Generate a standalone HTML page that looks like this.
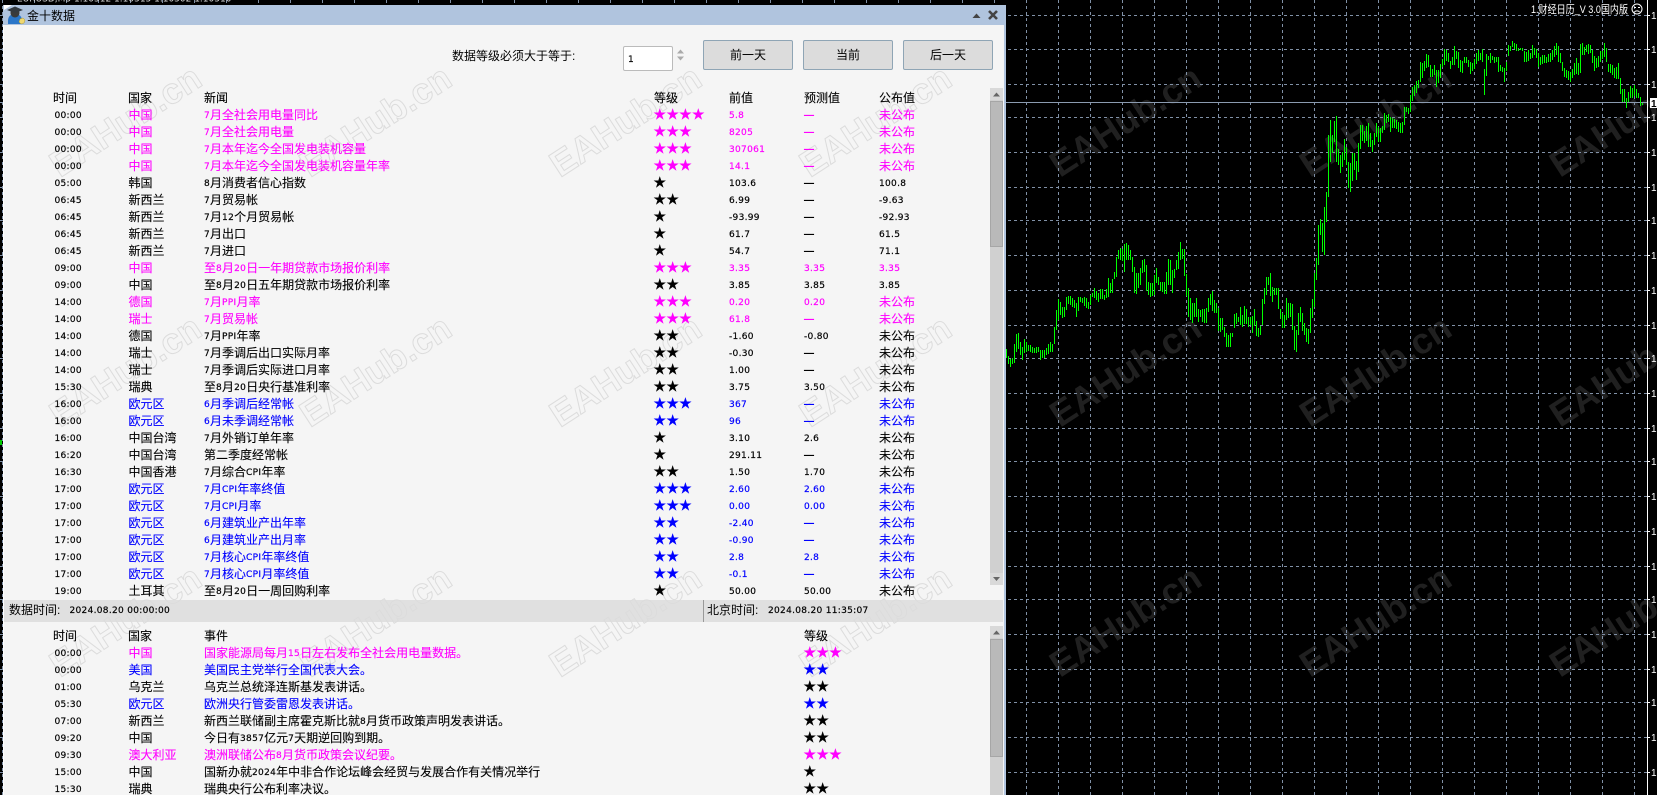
<!DOCTYPE html>
<html lang="zh"><head><meta charset="utf-8"><title>金十数据</title>
<style>
html,body{margin:0;padding:0;background:#000;width:1657px;height:795px;overflow:hidden}
body{position:relative;font:12px/17px "Liberation Sans","WenQuanYi Zen Hei","Noto Sans CJK SC",sans-serif;color:#000}
svg{position:absolute;left:0;top:0;display:block}
.w{position:absolute;left:3px;top:5px;width:1000px;height:790px;background:#f5f5f5;border-left:1px solid #fff;border-right:2px solid #b0c4de;box-sizing:content-box}
.tb{position:absolute;left:3px;top:5px;width:1002px;height:20px;background:#b0c4de}
.tt{position:absolute;left:27px;top:7px;font-size:12px;line-height:18px;color:#000}
.st{position:absolute;left:4px;top:600px;width:999px;height:22px;background:#e0e0e0}
.sep{position:absolute;left:703px;top:600px;width:1px;height:22px;background:#999}
.abs{position:absolute;white-space:nowrap}
.btn{position:absolute;top:40px;width:88px;height:28px;background:#dcdcdc;border:1px solid #8fa5b5;border-radius:2px;text-align:center;line-height:28px;font-size:12px}
.inp{position:absolute;left:623px;top:46px;width:48px;height:23px;background:#fff;border:1px solid #bbb;border-radius:2px}
.r{position:absolute;left:0;width:1000px;height:17px;white-space:nowrap;-webkit-text-stroke:.12px currentColor}
.r>span{position:absolute;top:0}
.r>span:nth-child(1){left:54.5px;color:#000}
.r>span:nth-child(2){left:128.5px}
.r>span:nth-child(3){left:204px}
.r>span:nth-child(4){left:654px}
.r>span:nth-child(5){left:729px}
.r>span:nth-child(6){left:804px}
.r>span:nth-child(7){left:879px}
.h>span:nth-child(1){left:53px}
.h>span:nth-child(2){left:128px}
.e>span:nth-child(4){left:804px}
.m{color:#f0f}.b{color:#00f}
i{font:normal 9px/17px "DejaVu Sans",sans-serif;letter-spacing:.3px;position:relative;top:-1px;-webkit-text-stroke:.2px currentColor}
em{font:normal 14px/17px "DejaVu Sans",sans-serif;letter-spacing:.27px;-webkit-text-stroke:.5px currentColor;margin-left:-.5px}
u{font:bold 10px/17px "Liberation Sans",sans-serif;text-decoration:none;position:relative;top:-1px}
</style></head><body>

<svg width="1657" height="795" viewBox="0 0 1657 795" xmlns="http://www.w3.org/2000/svg">
<g font-family="Liberation Sans" font-weight="bold" font-size="36" fill="#202020">
<text transform="translate(1060 178) rotate(-33)">EAHub.cn</text>
<text transform="translate(1310 178) rotate(-33)">EAHub.cn</text>
<text transform="translate(1560 178) rotate(-33)">EAHub.cn</text>
<text transform="translate(1060 428) rotate(-33)">EAHub.cn</text>
<text transform="translate(1310 428) rotate(-33)">EAHub.cn</text>
<text transform="translate(1560 428) rotate(-33)">EAHub.cn</text>
<text transform="translate(1060 678) rotate(-33)">EAHub.cn</text>
<text transform="translate(1310 678) rotate(-33)">EAHub.cn</text>
<text transform="translate(1560 678) rotate(-33)">EAHub.cn</text>
</g>
<g stroke="#8090a6" stroke-width="1" stroke-dasharray="3 3" shape-rendering="crispEdges" fill="none">
<path d="M0 15.5H1647M0 49.5H1647M0 84.5H1647M0 117.5H1647M0 152.5H1647M0 187.5H1647M0 220.5H1647M0 255.5H1647M0 290.5H1647M0 325.5H1647M0 358.5H1647M0 393.5H1647M0 428.5H1647M0 461.5H1647M0 496.5H1647M0 531.5H1647M0 566.5H1647M0 599.5H1647M0 634.5H1647M0 669.5H1647M0 702.5H1647M0 737.5H1647M0 772.5H1647"/>
<path d="M2.5 0V795M642.5 0V795M674.5 0V795M706.5 0V795M738.5 0V795M770.5 0V795M802.5 0V795M834.5 0V795M866.5 0V795M898.5 0V795M930.5 0V795M962.5 0V795M994.5 0V795M1026.5 0V795M1058.5 0V795M1090.5 0V795M1122.5 0V795M1154.5 0V795M1186.5 0V795M1218.5 0V795M1250.5 0V795M1282.5 0V795M1314.5 0V795M1346.5 0V795M1378.5 0V795M1410.5 0V795M1442.5 0V795M1474.5 0V795M1506.5 0V795M1538.5 0V795M1570.5 0V795M1602.5 0V795M1634.5 0V795M34.5 0V795M66.5 0V795M98.5 0V795M130.5 0V795M162.5 0V795M194.5 0V795M226.5 0V795M258.5 0V795M290.5 0V795M322.5 0V795M354.5 0V795M386.5 0V795M418.5 0V795M450.5 0V795M482.5 0V795M514.5 0V795M546.5 0V795M578.5 0V795M610.5 0V795"/>
</g>
<path stroke="#8b9bb0" stroke-width="1" shape-rendering="crispEdges" d="M0 102.5H1647"/>
<path stroke="#00ff00" stroke-width="1" fill="none" shape-rendering="crispEdges" d="M1006.5 349V358M1008.5 356V364M1010.5 359V367M1012.5 358V364M1014.5 344V363M1016.5 334V352M1018.5 333V349M1020.5 342V355M1022.5 347V360M1024.5 339V353M1026.5 342V352M1028.5 345V351M1030.5 345V352M1032.5 347V353M1034.5 348V353M1036.5 347V353M1038.5 347V352M1040.5 350V360M1042.5 350V358M1044.5 350V358M1046.5 348V355M1048.5 344V354M1050.5 342V352M1052.5 344V352M1054.5 327V344M1056.5 310V330M1058.5 299V320M1060.5 302V315M1062.5 307V318M1064.5 307V317M1066.5 297V310M1068.5 296V304M1070.5 296V305M1072.5 298V307M1074.5 300V308M1076.5 303V317M1078.5 297V311M1080.5 297V302M1082.5 298V303M1084.5 297V306M1086.5 298V308M1088.5 302V309M1090.5 295V305M1092.5 293V297M1094.5 288V298M1096.5 291V300M1098.5 293V302M1100.5 289V299M1102.5 289V299M1104.5 295V300M1106.5 289V298M1108.5 278V297M1110.5 283V293M1112.5 279V293M1114.5 272V279M1116.5 257V277M1118.5 250V259M1120.5 248V260M1122.5 249V261M1124.5 244V272M1126.5 243V260M1128.5 245V260M1130.5 250V260M1132.5 257V272M1134.5 267V293M1136.5 273V294M1138.5 273V288M1140.5 268V285M1142.5 260V273M1144.5 259V272M1146.5 265V291M1148.5 282V295M1150.5 283V297M1152.5 283V296M1154.5 275V295M1156.5 268V283M1158.5 277V285M1160.5 282V291M1162.5 282V292M1164.5 282V294M1166.5 272V294M1168.5 259V285M1170.5 260V285M1172.5 270V293M1174.5 269V278M1176.5 260V270M1178.5 252V269M1180.5 242V260M1182.5 249V259M1184.5 249V276M1186.5 274V296M1188.5 288V317M1190.5 298V320M1192.5 303V323M1194.5 303V317M1196.5 298V317M1198.5 309V322M1200.5 310V317M1202.5 309V322M1204.5 309V323M1206.5 308V323M1208.5 298V312M1210.5 294V305M1212.5 291V311M1214.5 300V313M1216.5 303V313M1218.5 308V331M1220.5 318V332M1222.5 318V330M1224.5 327V337M1226.5 333V347M1228.5 335V347M1230.5 333V347M1232.5 333V337M1234.5 314V328M1236.5 313V324M1238.5 317V322M1240.5 307V325M1242.5 315V327M1244.5 306V324M1246.5 309V324M1248.5 317V327M1250.5 317V325M1252.5 316V333M1254.5 309V326M1256.5 321V336M1258.5 328V337M1260.5 326V335M1262.5 299V325M1264.5 288V304M1266.5 277V295M1268.5 277V285M1270.5 273V296M1272.5 287V302M1274.5 288V295M1276.5 288V295M1278.5 288V309M1280.5 309V319M1282.5 313V328M1284.5 315V328M1286.5 298V320M1288.5 303V318M1290.5 303V317M1292.5 304V330M1294.5 326V350M1296.5 330V352M1298.5 313V335M1300.5 307V322M1302.5 313V331M1304.5 323V335M1306.5 328V342M1308.5 329V344M1310.5 308V333M1312.5 299V318M1314.5 273V307M1316.5 258V280M1318.5 225V265M1320.5 219V235M1322.5 223V252M1324.5 207V255M1326.5 192V222M1328.5 135V197M1330.5 120V162M1332.5 135V153M1334.5 121V142M1336.5 116V162M1338.5 149V165M1340.5 155V173M1342.5 152V167M1344.5 139V160M1346.5 147V165M1348.5 162V188M1350.5 163V192M1352.5 153V181M1354.5 153V170M1356.5 161V180M1358.5 143V172M1360.5 125V149M1362.5 125V141M1364.5 131V143M1366.5 126V141M1368.5 123V147M1370.5 133V147M1372.5 140V152M1374.5 133V145M1376.5 123V137M1378.5 127V142M1380.5 128V142M1382.5 126V133M1384.5 113V130M1386.5 115V123M1388.5 114V122M1390.5 117V132M1392.5 118V128M1394.5 119V128M1396.5 120V129M1398.5 122V132M1400.5 123V133M1402.5 122V133M1404.5 107V125M1406.5 107V112M1408.5 108V114M1410.5 95V112M1412.5 87V101M1414.5 85V96M1416.5 81V93M1418.5 80V88M1420.5 62V82M1422.5 63V78M1424.5 61V71M1426.5 54V68M1428.5 55V67M1430.5 65V77M1432.5 69V77M1434.5 65V75M1436.5 70V87M1438.5 70V83M1440.5 64V78M1442.5 59V67M1444.5 49V65M1446.5 50V61M1448.5 53V62M1450.5 61V69M1452.5 57V65M1454.5 46V65M1456.5 51V59M1458.5 52V68M1460.5 60V72M1462.5 61V73M1464.5 57V63M1466.5 57V63M1468.5 60V67M1470.5 62V74M1472.5 63V71M1474.5 59V69M1476.5 53V64M1478.5 50V61M1480.5 53V60M1482.5 49V62M1484.5 69V95M1486.5 54V76M1488.5 56V60M1490.5 53V63M1492.5 56V60M1494.5 57V63M1496.5 57V62M1498.5 57V72M1500.5 65V71M1502.5 67V72M1504.5 68V82M1506.5 62V71M1508.5 45V56M1510.5 46V51M1512.5 41V47M1514.5 43V49M1516.5 44V51M1518.5 48V51M1520.5 48V50M1522.5 48V51M1524.5 51V62M1526.5 52V62M1528.5 50V61M1530.5 53V59M1532.5 45V58M1534.5 48V55M1536.5 49V58M1538.5 53V67M1540.5 57V65M1542.5 55V64M1544.5 55V63M1546.5 57V63M1548.5 54V62M1550.5 53V62M1552.5 50V60M1554.5 46V57M1556.5 43V55M1558.5 46V62M1560.5 53V63M1562.5 62V71M1564.5 68V77M1566.5 70V78M1568.5 71V80M1570.5 72V82M1572.5 69V78M1574.5 63V75M1576.5 58V74M1578.5 63V75M1580.5 44V73M1582.5 43V55M1584.5 47V55M1586.5 45V52M1588.5 44V54M1590.5 45V53M1592.5 50V63M1594.5 56V71M1596.5 58V68M1598.5 56V67M1600.5 51V62M1602.5 51V59M1604.5 43V57M1606.5 48V62M1608.5 64V72M1610.5 64V73M1612.5 65V75M1614.5 68V78M1616.5 67V79M1618.5 63V79M1620.5 78V94M1622.5 89V102M1624.5 89V102M1626.5 98V108M1628.5 92V102M1630.5 86V98M1632.5 88V98M1634.5 85V96M1636.5 89V98M1638.5 93V98M1640.5 97V106M1642.5 103V105"/>
<path stroke="#fff" stroke-width="1" shape-rendering="crispEdges" d="M1647.5 0V795M1647 15.5h3M1647 49.5h3M1647 84.5h3M1647 117.5h3M1647 152.5h3M1647 187.5h3M1647 220.5h3M1647 255.5h3M1647 290.5h3M1647 325.5h3M1647 358.5h3M1647 393.5h3M1647 428.5h3M1647 461.5h3M1647 496.5h3M1647 531.5h3M1647 566.5h3M1647 599.5h3M1647 634.5h3M1647 669.5h3M1647 702.5h3M1647 737.5h3M1647 772.5h3"/>
<g fill="#fff" font-family="Liberation Sans" font-size="10">
<text x="1651" y="19">1</text><text x="1651" y="53">1</text><text x="1651" y="88">1</text><text x="1651" y="121">1</text><text x="1651" y="156">1</text><text x="1651" y="191">1</text><text x="1651" y="224">1</text><text x="1651" y="259">1</text><text x="1651" y="294">1</text><text x="1651" y="329">1</text><text x="1651" y="362">1</text><text x="1651" y="397">1</text><text x="1651" y="432">1</text><text x="1651" y="465">1</text><text x="1651" y="500">1</text><text x="1651" y="535">1</text><text x="1651" y="570">1</text><text x="1651" y="603">1</text><text x="1651" y="638">1</text><text x="1651" y="673">1</text><text x="1651" y="706">1</text><text x="1651" y="741">1</text><text x="1651" y="776">1</text>
</g>
<rect x="1650" y="98" width="7" height="10" fill="#fff"/>
<text x="1651" y="107" font-family="Liberation Sans" font-size="10" font-weight="bold" fill="#000">1</text>
<text x="1531" y="13" fill="#fff" font-family="Liberation Sans,WenQuanYi Zen Hei,Noto Sans CJK SC,sans-serif" font-size="11" textLength="97" lengthAdjust="spacingAndGlyphs">1.财经日历_V 3.0国内版</text>
<g stroke="#fff" stroke-width="1" fill="none"><circle cx="1637" cy="9" r="5"/><path d="M1634.5 12c1-1.5 4-1.500 5 0M1634 7.500h2M1638 7.500h2"/></g>
<text x="17" y="1.500" fill="#ddd" font-family="DejaVu Sans" font-size="9">EURUSD,M5  1.10512 1.10515 1.10502 1.10510</text>
<rect x="0" y="440" width="2" height="5" fill="#0c0"/>
</svg>

<div class="w"></div>
<div class="st"></div>
<svg width="1003" height="795" viewBox="0 0 1003 795" xmlns="http://www.w3.org/2000/svg">
<g font-family="Liberation Sans" font-weight="bold" font-size="36" fill="none" stroke="#dcdcdc" stroke-width="1">
<text transform="translate(60 178) rotate(-33)">EAHub.cn</text>
<text transform="translate(310 178) rotate(-33)">EAHub.cn</text>
<text transform="translate(560 178) rotate(-33)">EAHub.cn</text>
<text transform="translate(810 178) rotate(-33)">EAHub.cn</text>
<text transform="translate(60 428) rotate(-33)">EAHub.cn</text>
<text transform="translate(310 428) rotate(-33)">EAHub.cn</text>
<text transform="translate(560 428) rotate(-33)">EAHub.cn</text>
<text transform="translate(810 428) rotate(-33)">EAHub.cn</text>
<text transform="translate(60 678) rotate(-33)">EAHub.cn</text>
<text transform="translate(310 678) rotate(-33)">EAHub.cn</text>
<text transform="translate(560 678) rotate(-33)">EAHub.cn</text>
<text transform="translate(810 678) rotate(-33)">EAHub.cn</text>
</g>
</svg>
<div class="sep"></div>

<div class="tb"></div>
<svg width="1010" height="30" viewBox="0 0 1010 30" xmlns="http://www.w3.org/2000/svg">
<path d="M4 5h8l-8 5z" fill="#fff"/>
<path d="M8 21c0-5 3-7 7-7s7 2 7 7v3H8z" fill="#2b76c8"/>
<circle cx="15" cy="13" r="4.500" fill="#3a3a3a"/>
<path d="M7 10l8-3.500 8 3.500-8 3z" fill="#33393f"/>
<path d="M20 19l3-1 2 2-1 3-3 1-2-2z" fill="#f0d870" stroke="#b09a30" stroke-width=".5"/>
<path d="M972.500 18l4-4.500 4 4.500z" fill="#444"/>
<path d="M989 11l8 8M997 11l-8 8" stroke="#444" stroke-width="2.600" fill="none"/>
</svg>
<div class="tt">金十数据</div>

<div class="abs" style="left:452px;top:47px;line-height:18px">数据等级必须大于等于:</div>
<div class="inp"></div>
<div class="abs" style="left:628px;top:51px"><i>1</i></div>
<svg width="700" height="70" viewBox="0 0 700 70" xmlns="http://www.w3.org/2000/svg"><path d="M677 53.500l3.500-4 3.500 4zM677 56.500l3.500 4 3.500-4z" fill="#aaa"/></svg>
<div class="btn" style="left:703px">前一天</div>
<div class="btn" style="left:803px">当前</div>
<div class="btn" style="left:903px">后一天</div>

<svg width="1010" height="795" viewBox="0 0 1010 795" xmlns="http://www.w3.org/2000/svg">
<rect x="990" y="88" width="13" height="497" fill="#d0d0d0"/>
<rect x="990" y="88" width="13" height="12" fill="#d9d9d9"/>
<path d="M993 96.500l3.500-4 3.500 4z" fill="#666"/>
<rect x="990.500" y="101.500" width="12" height="145" fill="#b9b9b9" stroke="#a6a6a6"/>
<rect x="990" y="573" width="13" height="12" fill="#d9d9d9"/>
<path d="M993 577l3.500 4 3.500-4z" fill="#666"/>
<rect x="990" y="626" width="13" height="169" fill="#d0d0d0"/>
<rect x="990" y="626" width="13" height="12" fill="#d9d9d9"/>
<path d="M993 634.500l3.500-4 3.500 4z" fill="#666"/>
<rect x="990.500" y="639.500" width="12" height="117" fill="#b9b9b9" stroke="#a6a6a6"/>
</svg>

<div class="r h" style="top:90px"><span>时间</span><span>国家</span><span>新闻</span><span>等级</span><span>前值</span><span>预测值</span><span>公布值</span></div>
<div class="r m" style="top:107px"><span><i>00:00</i></span><span>中国</span><span><i>7</i>月全社会用电量同比</span><span><em>★★★★</em></span><span><i>5.8</i></span><span><u>—</u></span><span>未公布</span></div>
<div class="r m" style="top:124px"><span><i>00:00</i></span><span>中国</span><span><i>7</i>月全社会用电量</span><span><em>★★★</em></span><span><i>8205</i></span><span><u>—</u></span><span>未公布</span></div>
<div class="r m" style="top:141px"><span><i>00:00</i></span><span>中国</span><span><i>7</i>月本年迄今全国发电装机容量</span><span><em>★★★</em></span><span><i>307061</i></span><span><u>—</u></span><span>未公布</span></div>
<div class="r m" style="top:158px"><span><i>00:00</i></span><span>中国</span><span><i>7</i>月本年迄今全国发电装机容量年率</span><span><em>★★★</em></span><span><i>14.1</i></span><span><u>—</u></span><span>未公布</span></div>
<div class="r" style="top:175px"><span><i>05:00</i></span><span>韩国</span><span><i>8</i>月消费者信心指数</span><span><em>★</em></span><span><i>103.6</i></span><span><u>—</u></span><span><i>100.8</i></span></div>
<div class="r" style="top:192px"><span><i>06:45</i></span><span>新西兰</span><span><i>7</i>月贸易帐</span><span><em>★★</em></span><span><i>6.99</i></span><span><u>—</u></span><span><i>-9.63</i></span></div>
<div class="r" style="top:209px"><span><i>06:45</i></span><span>新西兰</span><span><i>7</i>月<i>12</i>个月贸易帐</span><span><em>★</em></span><span><i>-93.99</i></span><span><u>—</u></span><span><i>-92.93</i></span></div>
<div class="r" style="top:226px"><span><i>06:45</i></span><span>新西兰</span><span><i>7</i>月出口</span><span><em>★</em></span><span><i>61.7</i></span><span><u>—</u></span><span><i>61.5</i></span></div>
<div class="r" style="top:243px"><span><i>06:45</i></span><span>新西兰</span><span><i>7</i>月进口</span><span><em>★</em></span><span><i>54.7</i></span><span><u>—</u></span><span><i>71.1</i></span></div>
<div class="r m" style="top:260px"><span><i>09:00</i></span><span>中国</span><span>至<i>8</i>月<i>20</i>日一年期贷款市场报价利率</span><span><em>★★★</em></span><span><i>3.35</i></span><span><i>3.35</i></span><span><i>3.35</i></span></div>
<div class="r" style="top:277px"><span><i>09:00</i></span><span>中国</span><span>至<i>8</i>月<i>20</i>日五年期贷款市场报价利率</span><span><em>★★</em></span><span><i>3.85</i></span><span><i>3.85</i></span><span><i>3.85</i></span></div>
<div class="r m" style="top:294px"><span><i>14:00</i></span><span>德国</span><span><i>7</i>月<i>PPI</i>月率</span><span><em>★★★</em></span><span><i>0.20</i></span><span><i>0.20</i></span><span>未公布</span></div>
<div class="r m" style="top:311px"><span><i>14:00</i></span><span>瑞士</span><span><i>7</i>月贸易帐</span><span><em>★★★</em></span><span><i>61.8</i></span><span><u>—</u></span><span>未公布</span></div>
<div class="r" style="top:328px"><span><i>14:00</i></span><span>德国</span><span><i>7</i>月<i>PPI</i>年率</span><span><em>★★</em></span><span><i>-1.60</i></span><span><i>-0.80</i></span><span>未公布</span></div>
<div class="r" style="top:345px"><span><i>14:00</i></span><span>瑞士</span><span><i>7</i>月季调后出口实际月率</span><span><em>★★</em></span><span><i>-0.30</i></span><span><u>—</u></span><span>未公布</span></div>
<div class="r" style="top:362px"><span><i>14:00</i></span><span>瑞士</span><span><i>7</i>月季调后实际进口月率</span><span><em>★★</em></span><span><i>1.00</i></span><span><u>—</u></span><span>未公布</span></div>
<div class="r" style="top:379px"><span><i>15:30</i></span><span>瑞典</span><span>至<i>8</i>月<i>20</i>日央行基准利率</span><span><em>★★</em></span><span><i>3.75</i></span><span><i>3.50</i></span><span>未公布</span></div>
<div class="r b" style="top:396px"><span><i>16:00</i></span><span>欧元区</span><span><i>6</i>月季调后经常帐</span><span><em>★★★</em></span><span><i>367</i></span><span><u>—</u></span><span>未公布</span></div>
<div class="r b" style="top:413px"><span><i>16:00</i></span><span>欧元区</span><span><i>6</i>月未季调经常帐</span><span><em>★★</em></span><span><i>96</i></span><span><u>—</u></span><span>未公布</span></div>
<div class="r" style="top:430px"><span><i>16:00</i></span><span>中国台湾</span><span><i>7</i>月外销订单年率</span><span><em>★</em></span><span><i>3.10</i></span><span><i>2.6</i></span><span>未公布</span></div>
<div class="r" style="top:447px"><span><i>16:20</i></span><span>中国台湾</span><span>第二季度经常帐</span><span><em>★</em></span><span><i>291.11</i></span><span><u>—</u></span><span>未公布</span></div>
<div class="r" style="top:464px"><span><i>16:30</i></span><span>中国香港</span><span><i>7</i>月综合<i>CPI</i>年率</span><span><em>★★</em></span><span><i>1.50</i></span><span><i>1.70</i></span><span>未公布</span></div>
<div class="r b" style="top:481px"><span><i>17:00</i></span><span>欧元区</span><span><i>7</i>月<i>CPI</i>年率终值</span><span><em>★★★</em></span><span><i>2.60</i></span><span><i>2.60</i></span><span>未公布</span></div>
<div class="r b" style="top:498px"><span><i>17:00</i></span><span>欧元区</span><span><i>7</i>月<i>CPI</i>月率</span><span><em>★★★</em></span><span><i>0.00</i></span><span><i>0.00</i></span><span>未公布</span></div>
<div class="r b" style="top:515px"><span><i>17:00</i></span><span>欧元区</span><span><i>6</i>月建筑业产出年率</span><span><em>★★</em></span><span><i>-2.40</i></span><span><u>—</u></span><span>未公布</span></div>
<div class="r b" style="top:532px"><span><i>17:00</i></span><span>欧元区</span><span><i>6</i>月建筑业产出月率</span><span><em>★★</em></span><span><i>-0.90</i></span><span><u>—</u></span><span>未公布</span></div>
<div class="r b" style="top:549px"><span><i>17:00</i></span><span>欧元区</span><span><i>7</i>月核心<i>CPI</i>年率终值</span><span><em>★★</em></span><span><i>2.8</i></span><span><i>2.8</i></span><span>未公布</span></div>
<div class="r b" style="top:566px"><span><i>17:00</i></span><span>欧元区</span><span><i>7</i>月核心<i>CPI</i>月率终值</span><span><em>★★</em></span><span><i>-0.1</i></span><span><u>—</u></span><span>未公布</span></div>
<div class="r" style="top:583px"><span><i>19:00</i></span><span>土耳其</span><span>至<i>8</i>月<i>20</i>日一周回购利率</span><span><em>★</em></span><span><i>50.00</i></span><span><i>50.00</i></span><span>未公布</span></div>

<div class="abs" style="left:9px;top:602px">数据时间:</div>
<div class="abs" style="left:69.500px;top:602px"><i>2024.08.20 00:00:00</i></div>
<div class="abs" style="left:707px;top:602px">北京时间:</div>
<div class="abs" style="left:768px;top:602px"><i>2024.08.20 11:35:07</i></div>

<div class="r h e" style="top:628px"><span>时间</span><span>国家</span><span>事件</span><span>等级</span></div>
<div class="r m e" style="top:645px"><span><i>00:00</i></span><span>中国</span><span>国家能源局每月<i>15</i>日左右发布全社会用电量数据。</span><span><em>★★★</em></span></div>
<div class="r b e" style="top:662px"><span><i>00:00</i></span><span>美国</span><span>美国民主党举行全国代表大会。</span><span><em>★★</em></span></div>
<div class="r e" style="top:679px"><span><i>01:00</i></span><span>乌克兰</span><span>乌克兰总统泽连斯基发表讲话。</span><span><em>★★</em></span></div>
<div class="r b e" style="top:696px"><span><i>05:30</i></span><span>欧元区</span><span>欧洲央行管委雷恩发表讲话。</span><span><em>★★</em></span></div>
<div class="r e" style="top:713px"><span><i>07:00</i></span><span>新西兰</span><span>新西兰联储副主席霍克斯比就<i>8</i>月货币政策声明发表讲话。</span><span><em>★★</em></span></div>
<div class="r e" style="top:730px"><span><i>09:20</i></span><span>中国</span><span>今日有<i>3857</i>亿元<i>7</i>天期逆回购到期。</span><span><em>★★</em></span></div>
<div class="r m e" style="top:747px"><span><i>09:30</i></span><span>澳大利亚</span><span>澳洲联储公布<i>8</i>月货币政策会议纪要。</span><span><em>★★★</em></span></div>
<div class="r e" style="top:764px"><span><i>15:00</i></span><span>中国</span><span>国新办就<i>2024</i>年中非合作论坛峰会经贸与发展合作有关情况举行</span><span><em>★</em></span></div>
<div class="r e" style="top:781px"><span><i>15:30</i></span><span>瑞典</span><span>瑞典央行公布利率决议。</span><span><em>★★</em></span></div>
</body></html>
